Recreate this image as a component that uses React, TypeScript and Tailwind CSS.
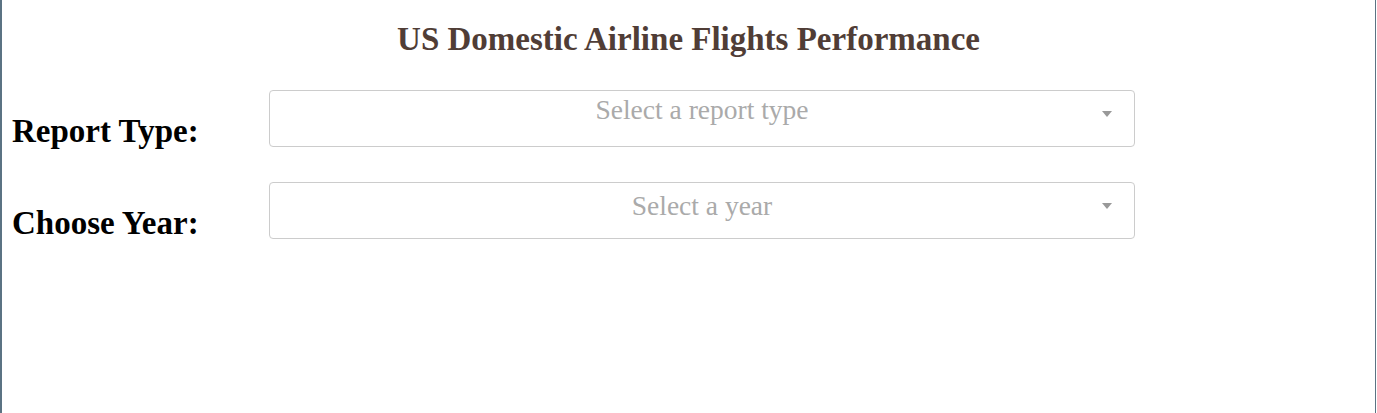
import React from 'react';

interface SelectBoxProps {
  placeholder: string;
  textPad: string;
}

const SelectBox: React.FC<SelectBoxProps> = ({ placeholder, textPad }) => {
  return (
    <div className="relative w-[866px] h-[57px] shrink-0 rounded-[4px] border border-[#cccccc] bg-white">
      <div className={`${textPad} text-center text-[27.5px] leading-none text-[#aaaaaa]`}>{placeholder}</div>
      <span className="absolute right-[22px] top-[20px] h-0 w-0 border-x-[5px] border-t-[6px] border-x-transparent border-t-[#999999]" />
    </div>
  );
};

interface FieldRowProps {
  label: string;
  placeholder: string;
  textPad: string;
  className?: string;
}

const FieldRow: React.FC<FieldRowProps> = ({ label, placeholder, textPad, className }) => {
  return (
    <div className={`flex items-start pl-[10px] ${className ?? ''}`}>
      <h2 className="w-[257px] shrink-0 pt-[25px] text-[33px] font-bold leading-none text-black">{label}</h2>
      <SelectBox placeholder={placeholder} textPad={textPad} />
    </div>
  );
};

export default function App() {
  return (
    <div className="h-[413px] w-[1376px] border-l-2 border-r border-[#5b7383] bg-white font-['Liberation_Serif',serif]">
      <h1 className="pt-[23px] text-center text-[33px] font-bold leading-none text-[#503D36]">
        US Domestic Airline Flights Performance
      </h1>
      <FieldRow className="mt-[34px]" label="Report Type:" placeholder="Select a report type" textPad="pt-[5px]" />
      <FieldRow className="mt-[34px]" label="Choose Year:" placeholder="Select a year" textPad="pt-[9px]" />
    </div>
  );
}
